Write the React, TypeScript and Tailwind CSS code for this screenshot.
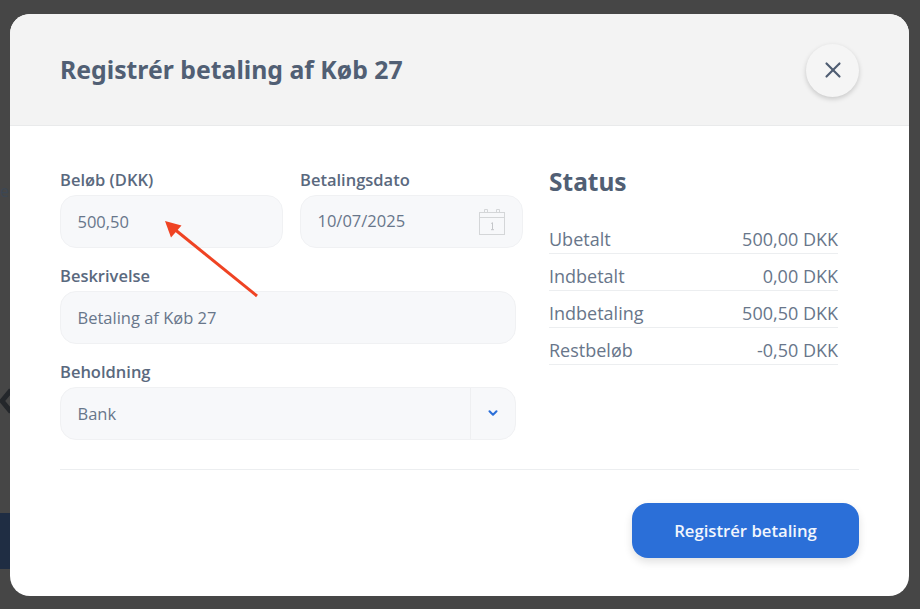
import { X, ChevronDown } from "lucide-react";

const rows = [
  ["Ubetalt", "500,00 DKK"],
  ["Indbetalt", "0,00 DKK"],
  ["Indbetaling", "500,50 DKK"],
  ["Restbeløb", "-0,50 DKK"],
];

function CalendarIcon() {
  return (
    <svg width="28" height="28" viewBox="0 0 28 28" fill="none" stroke="#d4d6d8" strokeWidth="1">
      <rect x="1.5" y="4.5" width="25" height="22" />
      <path d="M1.5 9.5h25" />
      <path d="M6.5 4.5v-3h3v3M18.5 4.5v-3h3v3" />
      <path d="M13.2 15.5l1.3-.8v7M13 21.7h3" stroke="#c4c6c9" />
    </svg>
  );
}

function Field({ label, value, className }: { label: string; value: string; className: string }) {
  return (
    <div className={className}>
      <div className="text-[16.5px] leading-[22px] font-semibold text-[#5a697e]">{label}</div>
      <div className="mt-[4px] -ml-[0.5px] h-[53px] rounded-[16px] border border-[#f0f1f3] bg-[#f7f8fa] pl-[17px] pt-[1px] flex items-center text-[16.5px] text-[#68768a]">
        {value}
      </div>
    </div>
  );
}

export default function App() {
  return (
    <div className="relative h-[609px] w-[920px] overflow-hidden bg-[#464646] pl-[10px] pt-[14px] font-['Open_Sans',sans-serif]">
      {/* dimmed page behind the modal */}
      <div className="absolute left-0 top-[513px] h-[56px] w-[10px] bg-[#1f2d43]" />
      <div className="absolute left-0 top-[179px] text-[16px] text-[#3c4754]">e</div>
      <svg className="absolute left-0 top-[387px]" width="10" height="28" viewBox="0 0 10 28" fill="none" stroke="#24272b" strokeWidth="5">
        <path d="M11 3L2 14l9 11" />
      </svg>

      {/* Modal */}
      <div className="h-[582px] w-[899px] overflow-hidden rounded-[20px] bg-white">
        <header className="flex h-[112px] items-center justify-between border-b border-[#e9eaeb] bg-[#f3f3f3] pl-[50px] pr-[50px]">
          <h1 className="mt-[1px] text-[24.8px] font-bold text-[#515f74] font-['Noto_Sans',sans-serif]">Registrér betaling af Køb 27</h1>
          <button className="mt-[1px] flex h-[53px] w-[53px] items-center justify-center rounded-full bg-[#f5f5f5] shadow-[0_2px_5px_rgba(0,0,0,0.18)]">
            <X className="h-[26px] w-[26px] text-[#4f5d72]" strokeWidth={2} />
          </button>
        </header>

        <div className="px-[50px]">
          <div className="flex h-[344px] border-b border-[#eceef0]">
            <div className="w-[463px] pt-[43px]">
              <div className="flex gap-[17px]">
                <Field label="Beløb (DKK)" value="500,50" className="w-[223px]" />
                <div className="w-[223px]">
                  <div className="text-[16.5px] leading-[22px] font-semibold text-[#5a697e]">Betalingsdato</div>
                  <div className="mt-[4px] -ml-[0.5px] flex h-[53px] items-center justify-between rounded-[16px] border border-[#f0f1f3] bg-[#f7f8fa] pl-[17px] pr-[16px] text-[16.5px] text-[#68768a]">
                    10/07/2025
                    <CalendarIcon />
                  </div>
                </div>
              </div>
              <Field label="Beskrivelse" value="Betaling af Køb 27" className="mt-[17px] w-[456px]" />
              <div className="mt-[17px] w-[456px]">
                <div className="text-[16.5px] leading-[22px] font-semibold text-[#5a697e]">Beholdning</div>
                <div className="mt-[4px] -ml-[0.5px] flex h-[53px] items-center rounded-[16px] border border-[#f0f1f3] bg-[#f7f8fa] text-[16.5px] text-[#68768a]">
                  <span className="flex-1 pl-[17px] pt-[1px]">Bank</span>
                  <span className="flex h-full w-[45px] items-center justify-center border-l border-[#eeeff1]">
                    <ChevronDown className="-mt-[1px] h-[14px] w-[14px] text-[#2b6fd8]" strokeWidth={3.5} />
                  </span>
                </div>
              </div>
            </div>

            <div className="ml-[26px] w-[289px] pt-[39px]">
              <h2 className="text-[24.5px] leading-[34px] font-bold text-[#515f74] font-['Noto_Sans',sans-serif]">Status</h2>
              <div className="mt-[18px]">
                {rows.map(([k, v]) => (
                  <div key={k} className="flex h-[37px] items-center justify-between border-b border-[#eceef0] pt-[11px] pb-[2px] text-[18px] text-[#68768a]">
                    <span>{k}</span>
                    <span>{v}</span>
                  </div>
                ))}
              </div>
            </div>
          </div>

          <div className="mt-[33px] flex justify-end">
            <button className="h-[55px] w-[227px] rounded-[16px] bg-[#2b6fd8] text-[16.7px] font-semibold text-[#f2f6fd] shadow-[0_4px_8px_rgba(0,0,0,0.12)]">
              Registrér betaling
            </button>
          </div>
        </div>
      </div>

      {/* Annotation arrow */}
      <svg className="absolute left-0 top-0" width="920" height="609" fill="none">
        <path d="M257 296L173 228" stroke="#ef4323" strokeWidth="3" />
        <path d="M165 221L181.5 225.5L171 237.5Z" fill="#ef4323" />
      </svg>
    </div>
  );
}
